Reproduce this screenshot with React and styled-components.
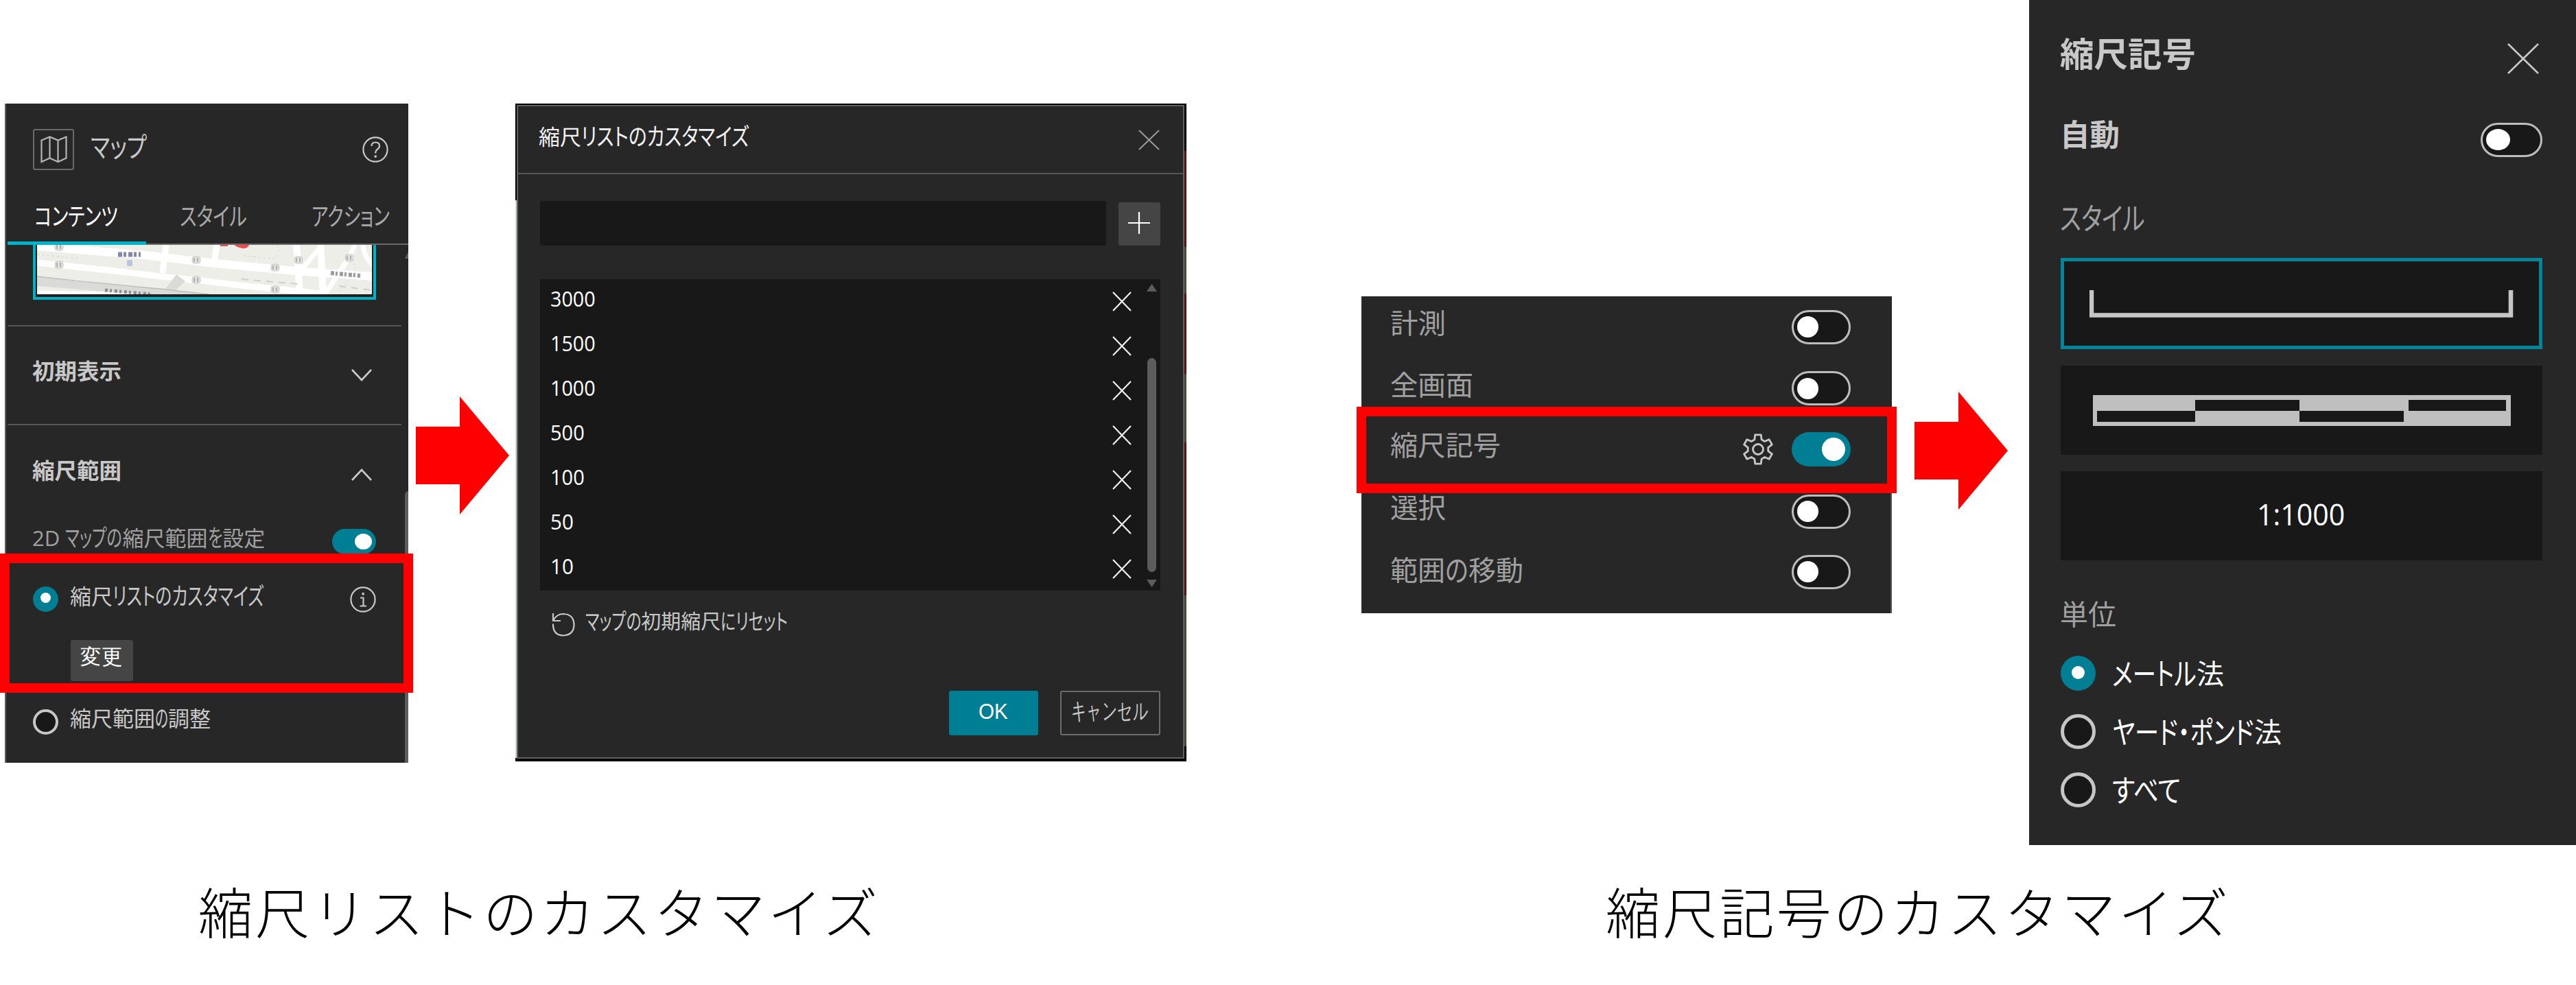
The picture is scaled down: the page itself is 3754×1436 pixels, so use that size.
import React, { useLayoutEffect, useRef } from "react";
import styled, { createGlobalStyle, css } from "styled-components";

const c = {
  panel: "#272727",
  well: "#181818",
  line: "#565656",
  teal: "#007f94",
  cyan: "#00b2c8",
  text: "#c8c8c8",
  muted: "#a0a0a0",
  red: "#ff0000",
};

const Global = createGlobalStyle`
  *, *::before, *::after { box-sizing: border-box; }
  body { margin: 0; background: #fff; font-family: "Open Sans", "Noto Sans CJK JP", sans-serif; }
  svg { display: block; flex: none; }
`;

/* ---------- text with condensed kana ---------- */
const LabelBox = styled.span`
  display: block;
  flex: none;
  width: ${(p) => p.$w}px;
  height: ${(p) => p.$size * 1.4}px;
  line-height: ${(p) => p.$size * 1.4}px;
  font-size: ${(p) => p.$size}px;
  font-weight: ${(p) => p.$weight || 400};
  color: ${(p) => p.$color || c.text};
  white-space: pre;
  font-feature-settings: "palt";
  transform: translate(-1px, ${(p) => -(p.$lift || 0)}px);
`;
const Run = styled.span`
  display: inline-block;
`;
const Ink = styled.span`
  display: inline-block;
  transform-origin: 0 50%;
`;

const KANA = /([\u3040-\u30ff]+)/;
const KANA_HEIGHT = 1.12;

function Label({ children, w, size, weight, color, lift }) {
  const box = useRef(null);
  const parts = String(children).split(KANA).filter(Boolean);
  const mixed = parts.some((t) => KANA.test(t)) && parts.some((t) => !KANA.test(t));
  useLayoutEffect(() => {
    const runs = Array.from(box.current.children);
    let fixed = 0;
    let flexible = 0;
    const widths = runs.map((r) => r.firstChild.offsetWidth);
    runs.forEach((r, i) => {
      if (!mixed || KANA.test(parts[i])) flexible += widths[i];
      else fixed += widths[i];
    });
    const k = (w - fixed) / flexible;
    runs.forEach((r, i) => {
      const kana = KANA.test(parts[i]);
      if (!mixed || kana) {
        r.style.width = `${widths[i] * k}px`;
        r.firstChild.style.transform = `scale(${k}, ${kana ? KANA_HEIGHT : 1})`;
      }
    });
  }, []);
  return (
    <LabelBox ref={box} $w={w} $size={size} $weight={weight} $color={color} $lift={lift}>
      {parts.map((t, i) => (
        <Run key={i}>
          <Ink>{t}</Ink>
        </Run>
      ))}
    </LabelBox>
  );
}

/* ---------- page ---------- */
const Page = styled.main`
  display: flex;
  width: 3754px;
  height: 1436px;
  overflow: hidden;
  background: #fff;
`;
const Figure = styled.figure`
  margin: 0;
  display: flex;
  flex-direction: column;
  flex: none;
  width: ${(p) => p.$w}px;
  padding-top: ${(p) => p.$top}px;
`;
const Stage = styled.div`
  display: flex;
  align-items: flex-start;
  height: ${(p) => p.$h}px;
  padding-left: ${(p) => p.$left}px;
`;
const Caption = styled.figcaption`
  margin: ${(p) => p.$top}px 0 0 ${(p) => p.$left}px;
  height: 120px;
  line-height: 120px;
  font-family: "Noto Sans CJK JP", sans-serif;
  font-weight: 300;
  font-size: 79.5px;
  letter-spacing: 3.5px;
  color: #000;
  white-space: nowrap;
`;
const ArrowBox = styled.div`
  flex: none;
  margin: ${(p) => p.$top}px ${(p) => p.$right}px 0 ${(p) => p.$left}px;
`;
const Arrow = (p) => (
  <ArrowBox $top={p.top} $left={p.left} $right={p.right}>
    <svg width="136" height="172" viewBox="0 0 136 172">
      <path d="M0 44H64V0L136 86L64 172V128H0Z" fill={c.red} />
    </svg>
  </ArrowBox>
);
const Highlight = styled.div`
  position: absolute;
  left: ${(p) => p.$x}px;
  top: ${(p) => p.$y}px;
  width: ${(p) => p.$w}px;
  height: ${(p) => p.$h}px;
  border: 14px solid ${c.red};
`;

/* ---------- shared controls ---------- */
const Row = styled.div`
  display: flex;
  align-items: center;
  justify-content: ${(p) => (p.$start ? "flex-start" : "space-between")};
  flex: none;
  height: ${(p) => p.$h}px;
  padding: ${(p) => p.$pad || "0"};
  gap: ${(p) => p.$gap || 0}px;
`;
const Divider = styled.div`
  height: 2px;
  background: ${c.line};
`;
const Toggle = styled.span`
  flex: none;
  display: flex;
  align-items: center;
  justify-content: ${(p) => (p.$on ? "flex-end" : "flex-start")};
  width: ${(p) => p.$w}px;
  height: ${(p) => p.$h}px;
  border-radius: ${(p) => p.$h / 2}px;
  padding: 0 ${(p) => (p.$on ? p.$inset : p.$inset - 3)}px;
  background: ${(p) => (p.$on ? c.teal : c.well)};
  ${(p) => !p.$on && css`border: 3px solid #bdbdbd;`}
  &::before {
    content: "";
    width: ${(p) => p.$knobW}px;
    height: ${(p) => p.$knobH}px;
    border-radius: 50%;
    background: #fff;
  }
`;
const Radio = styled.span`
  flex: none;
  display: flex;
  align-items: center;
  justify-content: center;
  width: ${(p) => p.$d}px;
  height: ${(p) => p.$d}px;
  border-radius: 50%;
  background: ${(p) => (p.$on ? c.teal : c.well)};
  border: ${(p) => (p.$on ? "none" : `${p.$stroke}px solid #c6c6c6`)};
  &::before {
    content: "";
    display: ${(p) => (p.$on ? "block" : "none")};
    width: ${(p) => p.$dot}px;
    height: ${(p) => p.$dot}px;
    margin-bottom: 3px;
    border-radius: 50%;
    background: #fff;
  }
`;
const Cross = ({ w, h, color, stroke = 2.4 }) => (
  <svg width={w} height={h} viewBox={`0 0 ${w} ${h}`}>
    <path d={`M1 1L${w - 1} ${h - 1}M${w - 1} 1L1 ${h - 1}`} stroke={color} strokeWidth={stroke} fill="none" />
  </svg>
);
const Chevron = ({ up }) => (
  <svg width="30" height="18" viewBox="0 0 30 18">
    <path d={up ? "M1 17L15 2L29 17" : "M1 1L15 16L29 1"} stroke={c.text} strokeWidth="2.6" fill="none" />
  </svg>
);

/* ---------- map settings panel ---------- */
const MapPanel = styled.section`
  position: relative;
  display: flex;
  flex-direction: column;
  flex: none;
  width: 588px;
  height: 961px;
  background: ${c.panel};
  border-left: 2px solid #5a5a5a;
  padding-left: 2px;
`;
const MapBadge = styled.span`
  display: flex;
  align-items: center;
  justify-content: center;
  width: 60px;
  height: 60px;
  border: 2px solid #6a6a6a;
  border-radius: 3px;
  margin-right: 25px;
`;
const Group = styled.div`
  display: flex;
  align-items: center;
`;
const Tabs = styled.nav`
  display: flex;
  flex: none;
  height: 72px;
  box-shadow: inset 0 -2px 0 #6a6a6a;
`;
const Tab = styled.div`
  flex: none;
  width: ${(p) => p.$w}px;
  padding: 9px 0 0 ${(p) => p.$pl}px;
  border-bottom: 5px solid ${(p) => (p.$active ? c.cyan : "transparent")};
`;
const Body = styled.div`
  display: flex;
  flex: 1;
`;
const Content = styled.div`
  display: flex;
  flex-direction: column;
  width: 574px;
`;
const Thumb = styled.div`
  flex: none;
  width: 500px;
  height: 80px;
  margin: 0 0 37px 37px;
  padding: 0 2px 4px;
  border: 4px solid ${c.cyan};
  border-top: 0;
  background: #202020;
`;
const Track = styled.div`
  display: flex;
  flex-direction: column;
  width: 5px;
  margin-left: 5px;
  padding-top: 10px;
`;
const TrackThumb = styled.div`
  flex: 1;
  margin-top: 339px;
  border-radius: 5px 0 0 0;
  background: #5c5c5c;
`;
const SmallButton = styled.button`
  display: flex;
  align-items: center;
  justify-content: center;
  width: 91px;
  height: 60px;
  margin: 0 0 0 92px;
  padding: 0;
  border: 0;
  border-radius: 3px;
  background: #454545;
`;

const badges = [[32, 3], [32, 29], [232, 22], [232, 51], [347, 33], [347, 65], [381, 22], [455, 19]];
const MapArt = () => (
  <svg width="488" height="72" viewBox="0 0 488 72">
    <rect width="488" height="72" fill="#eeeee8" />
    <g fill="none" stroke="#fff">
      <path d="M0 2L158 15L260 27L376 38L489 46" strokeWidth="12" />
      <path d="M0 26L114 38L180 46L238 52L296 59L376 67L420 72" strokeWidth="9" />
      <path d="M188 0L183 41" strokeWidth="9" />
      <path d="M262 0L258 26" strokeWidth="9" />
      <path d="M378 0L383 72M413 0L417 72" strokeWidth="10" />
      <path d="M414 2L387 34M463 0L455 18L421 70" strokeWidth="7" />
      <path d="M475 0Q476 16 489 30" strokeWidth="7" />
      <path d="M0 69L140 72" strokeWidth="5" />
    </g>
    <path d="M0 46L63 53L125 60L187 64L203 43L216 53L201 67L250 72H150L0 60Z" fill="#dadad9" />
    <path d="M0 46L63 53L187 65L250 72" fill="none" stroke="#bdbdbb" strokeWidth="1.5" />
    <path d="M298 50L380 57M440 60L488 66" stroke="#cfcfc9" strokeWidth="2" strokeDasharray="10 8" />
    <path d="M350 0Q356 12 345 20L300 16M455 22Q470 30 460 44L440 68M0 14L60 20M20 50L110 56" stroke="#d9d9d2" strokeWidth="1" strokeDasharray="4 3" fill="none" />
    <path d="M267 0H278V2H267ZM287 0H309Q307 6 299 5L292 3Z" fill="#f24b4b" />
    {badges.map(([x, y], i) => (
      <g key={i}>
        <rect x={x - 6} y={y - 5} width="12" height="10" rx="4" fill="#e2e2e0" stroke="#c6c6c4" strokeWidth="1" />
        <path d={`M${x - 3} ${y - 3}v6M${x + 2} ${y - 3}v6`} stroke="#a2a2a0" strokeWidth="1.6" />
      </g>
    ))}
    <path d="M118 14H151" stroke="#8488ab" strokeWidth="7" strokeDasharray="6 2 4 3" />
    <rect x="131" y="22" width="8" height="9" rx="2" fill="#b5c6de" />
    <path d="M99 66L166 72" stroke="#8e8e8e" strokeWidth="5" strokeDasharray="4 3 3 4" />
    <path d="M428 41L471 45" stroke="#9a9a9a" strokeWidth="6" strokeDasharray="5 2 3 3" />
  </svg>
);

function MapSettings() {
  return (
    <MapPanel>
      <Row $h={134} $pad="0 29px 0 37px">
        <Group>
          <MapBadge>
            <svg width="39" height="40" viewBox="0 0 39 40">
              <path d="M1.5 6.5L13.5 1.5L25.5 6.5L37.5 1.5V32.5L25.5 38L13.5 32.5L1.5 38ZM13.5 1.5V32.5M25.5 6.5V38" fill="none" stroke="#b4b4b4" strokeWidth="2.2" />
            </svg>
          </MapBadge>
          <Label size={36} w={82} lift={4}>マップ</Label>
        </Group>
        <svg width="38" height="38" viewBox="0 0 38 38">
          <circle cx="19" cy="19" r="17.6" fill="none" stroke={c.text} strokeWidth="2.2" />
          <path d="M13.5 14Q13.5 8.5 19.2 8.5Q25 8.5 25 13.7Q25 16.5 22 18.7Q19.2 20.8 19.2 24.5" fill="none" stroke={c.text} strokeWidth="2.2" />
          <rect x="17.6" y="27.5" width="3.2" height="3.2" fill={c.text} />
        </svg>
      </Row>
      <Tabs>
        <Tab $w={202} $pl={40} $active>
          <Label size={32} w={122} color="#fff">コンテンツ</Label>
        </Tab>
        <Tab $w={192} $pl={50}>
          <Label size={32} w={98} color="#a8a8a8">スタイル</Label>
        </Tab>
        <Tab $w={190} $pl={50}>
          <Label size={32} w={114} color="#a8a8a8">アクション</Label>
        </Tab>
      </Tabs>
      <Body>
        <Content>
          <Thumb><MapArt /></Thumb>
          <Divider />
          <Row $h={142} $pad="0 43px 0 37px">
            <Label size={32} w={130} weight={700} lift={6}>初期表示</Label>
            <Chevron />
          </Row>
          <Divider />
          <Row $h={144} $pad="0 43px 0 37px">
            <Label size={32} w={130} weight={700} lift={6}>縮尺範囲</Label>
            <Chevron up />
          </Row>
          <Row $h={50} $pad="0 37px">
            <Label size={31} w={339} color={c.muted} lift={4}>2D マップの縮尺範囲を設定</Label>
            <Toggle $on $w={64} $h={37} $inset={6} $knobW={25} $knobH={23} />
          </Row>
          <Row $h={119} $pad="0 37px">
            <Row $start $gap={18}>
              <Radio $on $d={37} $dot={15} />
              <Label size={31} w={282} lift={4}>縮尺リストのカスタマイズ</Label>
            </Row>
            <svg width="38" height="38" viewBox="0 0 38 38">
              <circle cx="19" cy="19" r="17.6" fill="none" stroke={c.text} strokeWidth="2.2" />
              <path d="M15 16.5H19.5V28M14.5 28.5H24" fill="none" stroke={c.text} strokeWidth="2.2" />
              <rect x="17.5" y="9" width="3.2" height="3.5" fill={c.text} />
            </svg>
          </Row>
          <SmallButton>
            <Label size={31} w={61} color="#fff" lift={5}>変更</Label>
          </SmallButton>
          <Row $h={119} $pad="0 37px" $start $gap={18}>
            <Radio $d={37} $stroke={4} />
            <Label size={31} w={205} lift={5}>縮尺範囲の調整</Label>
          </Row>
        </Content>
        <Track>
          <svg width="5" height="10" viewBox="0 0 5 10"><path d="M0 10L5 0V10Z" fill="#5c5c5c" /></svg>
          <TrackThumb />
        </Track>
      </Body>
      <Highlight $x={-9} $y={656} $w={602} $h={203} />
    </MapPanel>
  );
}

/* ---------- scale list dialog ---------- */
const DialogBackdrop = styled.div`
  flex: none;
  width: 978px;
  height: 959px;
  padding: 2px 3px 4px 2px;
  background:
    linear-gradient(#000 0 141px, #cfd6d6 141px 100%) left top / 2px 954px no-repeat,
    linear-gradient(#000 0 69px, #5e1212 69px 209px, #4b4944 209px 277px, #5e1212 277px 394px,
      #4b4944 394px 494px, #5e1212 494px 717px, #4b4944 717px 937px, #000 937px) right top / 3px 100% no-repeat,
    #000;
`;
const Dialog = styled.section`
  height: 953px;
  border: 2px solid #5f6060;
  background: ${c.panel};
`;
const DialogBody = styled.div`
  padding: 39px 33px 0 32px;
`;
const ScaleInput = styled.div`
  width: 825px;
  height: 65px;
  border-radius: 3px;
  background: ${c.well};
`;
const AddButton = styled.button`
  display: flex;
  align-items: center;
  justify-content: center;
  align-self: flex-end;
  width: 61px;
  height: 63px;
  padding: 0 2px 3px 0;
  border: 0;
  border-radius: 3px;
  background: #454545;
`;
const ScaleList = styled.div`
  display: flex;
  height: 454px;
  margin-top: 49px;
  overflow: hidden;
  background: ${c.well};
`;
const ScaleRows = styled.div`
  width: 881px;
`;
const ListScroll = styled.div`
  display: flex;
  flex-direction: column;
  align-items: center;
  width: 23px;
  padding: 7px 2px 0 0;
`;
const ListThumb = styled.div`
  width: 13px;
  height: 312px;
  margin: 97px 0 11px;
  border-radius: 7px;
  background: #5c5c5c;
`;
const Footer = styled.div`
  display: flex;
  justify-content: flex-end;
  gap: 32px;
  margin-top: 48px;
`;
const Button = styled.button`
  display: flex;
  align-items: center;
  justify-content: center;
  width: ${(p) => p.$w}px;
  height: 65px;
  padding: 0;
  border: ${(p) => (p.$primary ? "0" : "2px solid #6c6c6c")};
  border-radius: 3px;
  background: ${(p) => (p.$primary ? c.teal : "transparent")};
`;

const scales = ["3000", "1500", "1000", "500", "100", "50", "10"];

function ScaleDialog() {
  return (
    <DialogBackdrop>
      <Dialog>
        <Row $h={97} $pad="0 34px 0 31px">
          <Label size={31} w={306} color="#f2f2f2" lift={4}>縮尺リストのカスタマイズ</Label>
          <Cross w={31} h={30} color="#9a9a9a" stroke={2} />
        </Row>
        <Divider />
        <DialogBody>
          <Row $h={65}>
            <ScaleInput />
            <AddButton>
              <svg width="32" height="32" viewBox="0 0 32 32">
                <path d="M16 0V32M0 16H32" stroke="#fff" strokeWidth="2.2" />
              </svg>
            </AddButton>
          </Row>
          <ScaleList>
            <ScaleRows>
              {scales.map((s) => (
                <Row key={s} $h={65} $pad="0 19px 0 16px">
                  <Label size={31} w={s.length * 16.2 + 1} color="#fff" lift={4}>{s}</Label>
                  <Cross w={28} h={29} color="#f0f0f0" stroke={2.2} />
                </Row>
              ))}
            </ScaleRows>
            <ListScroll>
              <svg width="15" height="11" viewBox="0 0 15 11"><path d="M0 11L7.5 0L15 11Z" fill="#5c5c5c" /></svg>
              <ListThumb />
              <svg width="15" height="11" viewBox="0 0 15 11"><path d="M0 0L7.5 11L15 0Z" fill="#5c5c5c" /></svg>
            </ListScroll>
          </ScaleList>
          <Row $h={98} $pad="0 0 0 17px" $start $gap={16}>
            <svg width="34" height="35" viewBox="0 0 34 35">
              <path d="M2 16.5Q1.5 33 17 33.5Q32.5 32.5 32.5 17.5Q32 2.5 17 2Q7.500 2 2.5 11M2 1V12H13" fill="none" stroke={c.text} strokeWidth="2.2" />
            </svg>
            <Label size={29} w={295} lift={4}>マップの初期縮尺にリセット</Label>
          </Row>
          <Footer>
            <Button $primary $w={130}>
              <Label size={31} w={43} color="#fff" lift={2}>OK</Label>
            </Button>
            <Button $w={146}>
              <Label size={30} w={112} lift={3}>キャンセル</Label>
            </Button>
          </Footer>
        </DialogBody>
      </Dialog>
    </DialogBackdrop>
  );
}

/* ---------- tools panel ---------- */
const ToolsPanel = styled.section`
  position: relative;
  flex: none;
  width: 773px;
  height: 462px;
  margin-top: 432px;
  background: linear-gradient(#555 0 0) right bottom / 2px 175px no-repeat, ${c.panel};
`;
const tools = [
  { name: "計測", w: 81, h: 89, lift: 6 },
  { name: "全画面", w: 121, h: 90, lift: 5 },
  { name: "縮尺記号", w: 161, h: 88, lift: 6, on: true },
  { name: "選択", w: 81, h: 93, lift: 6 },
  { name: "範囲の移動", w: 194, h: 83, lift: 3 },
];
const gearTeeth = () => {
  const pts = [];
  for (let i = 0; i < 6; i++) {
    const a = (i * Math.PI) / 3 - Math.PI / 2;
    [[-0.35, 15], [-0.2, 21.5], [0.2, 21.5], [0.35, 15]].forEach(([d, r]) => {
      pts.push(`${(23 + r * Math.cos(a + d)).toFixed(2)} ${(23 + r * Math.sin(a + d)).toFixed(2)}`);
    });
  }
  return `M${pts.join("L")}Z`;
};
function Tools() {
  return (
    <ToolsPanel>
      {tools.map((t) => (
        <Row key={t.name} $h={t.h} $pad="0 60px 0 43px">
          <Label size={40} w={t.w} color={c.muted} lift={t.lift}>{t.name}</Label>
          <Row $start $gap={26}>
            {t.on && (
              <svg width="46" height="46" viewBox="0 0 46 46">
                <path d={gearTeeth()} fill="none" stroke={c.text} strokeWidth="2.8" strokeLinejoin="round" />
                <circle cx="23" cy="23" r="7.5" fill="none" stroke={c.text} strokeWidth="2.8" />
              </svg>
            )}
            <Toggle $on={t.on} $w={86} $h={50} $inset={8} $knobW={t.on ? 34 : 31} $knobH={t.on ? 34 : 31} />
          </Row>
        </Row>
      ))}
      <Highlight $x={-7} $y={161} $w={787} $h={126} />
    </ToolsPanel>
  );
}

/* ---------- scale bar panel ---------- */
const ScalePanel = styled.section`
  display: flex;
  flex-direction: column;
  flex: none;
  width: 797px;
  height: 1232px;
  padding: 0 49px 0 46px;
  background: ${c.panel};
`;
const Options = styled.div`
  display: flex;
  flex-direction: column;
  gap: 24px;
`;
const Option = styled.div`
  display: flex;
  align-items: center;
  justify-content: center;
  height: ${(p) => (p.$selected ? 133 : 130)}px;
  background: ${c.well};
  border: ${(p) => (p.$selected ? "5px solid #00859b" : "0")};
`;
function ScaleBar() {
  return (
    <ScalePanel>
      <Row $h={171} $pad="0 5px 0 0">
        <Label size={49} w={198} weight={700} lift={7}>縮尺記号</Label>
        <Cross w={46} h={45} color={c.text} stroke={2.6} />
      </Row>
      <Row $h={65}>
        <Label size={44} w={87} weight={700} lift={7}>自動</Label>
        <Toggle $w={90} $h={50} $inset={8} $knobW={35} $knobH={31} />
      </Row>
      <Row $h={140} $pad="24px 0 0">
        <Label size={40} w={124} color={c.muted}>スタイル</Label>
      </Row>
      <Options>
        <Option $selected>
          <svg width="618" height="40" viewBox="0 0 618 40">
            <path d="M3 0V36.5H614V0" fill="none" stroke="#c6c6c6" strokeWidth="6.5" />
          </svg>
        </Option>
        <Option>
          <svg width="609" height="45" viewBox="0 0 609 45">
            <rect width="609" height="45" fill="#bfbfbf" />
            <path d="M6 23H149V39H6ZM149 7H301V23H149ZM301 23H453V39H301ZM460 7H602V23H460Z" fill={c.well} />
          </svg>
        </Option>
        <Option>
          <Label size={44} w={128} color="#fff" lift={2}>1:1000</Label>
        </Option>
      </Options>
      <Row $h={122} $pad="37px 0 0">
        <Label size={41} w={82} color={c.muted} lift={1}>単位</Label>
      </Row>
      <Row $h={85} $start $gap={25}>
        <Radio $on $d={51} $dot={19} />
        <Label size={40} w={163} color="#fff">メートル法</Label>
      </Row>
      <Row $h={85} $start $gap={25}>
        <Radio $d={51} $stroke={5} />
        <Label size={40} w={247} color="#fff">ヤード・ポンド法</Label>
      </Row>
      <Row $h={85} $start $gap={25}>
        <Radio $d={51} $stroke={5} />
        <Label size={40} w={100} color="#fff">すべて</Label>
      </Row>
    </ScalePanel>
  );
}

export default function App() {
  return (
    <>
      <Global />
      <Page>
        <Figure $w={1984} $top={151}>
          <Stage $h={961} $left={7}>
            <MapSettings />
            <Arrow top={427} left={11} right={9} />
            <ScaleDialog />
          </Stage>
          <Caption $top={155} $left={289}>縮尺リストのカスタマイズ</Caption>
        </Figure>
        <Figure $w={1770} $top={0}>
          <Stage $h={1232} $left={0}>
            <Tools />
            <Arrow top={571} left={33} right={31} />
            <ScaleBar />
          </Stage>
          <Caption $top={35} $left={356}>縮尺記号のカスタマイズ</Caption>
        </Figure>
      </Page>
    </>
  );
}
